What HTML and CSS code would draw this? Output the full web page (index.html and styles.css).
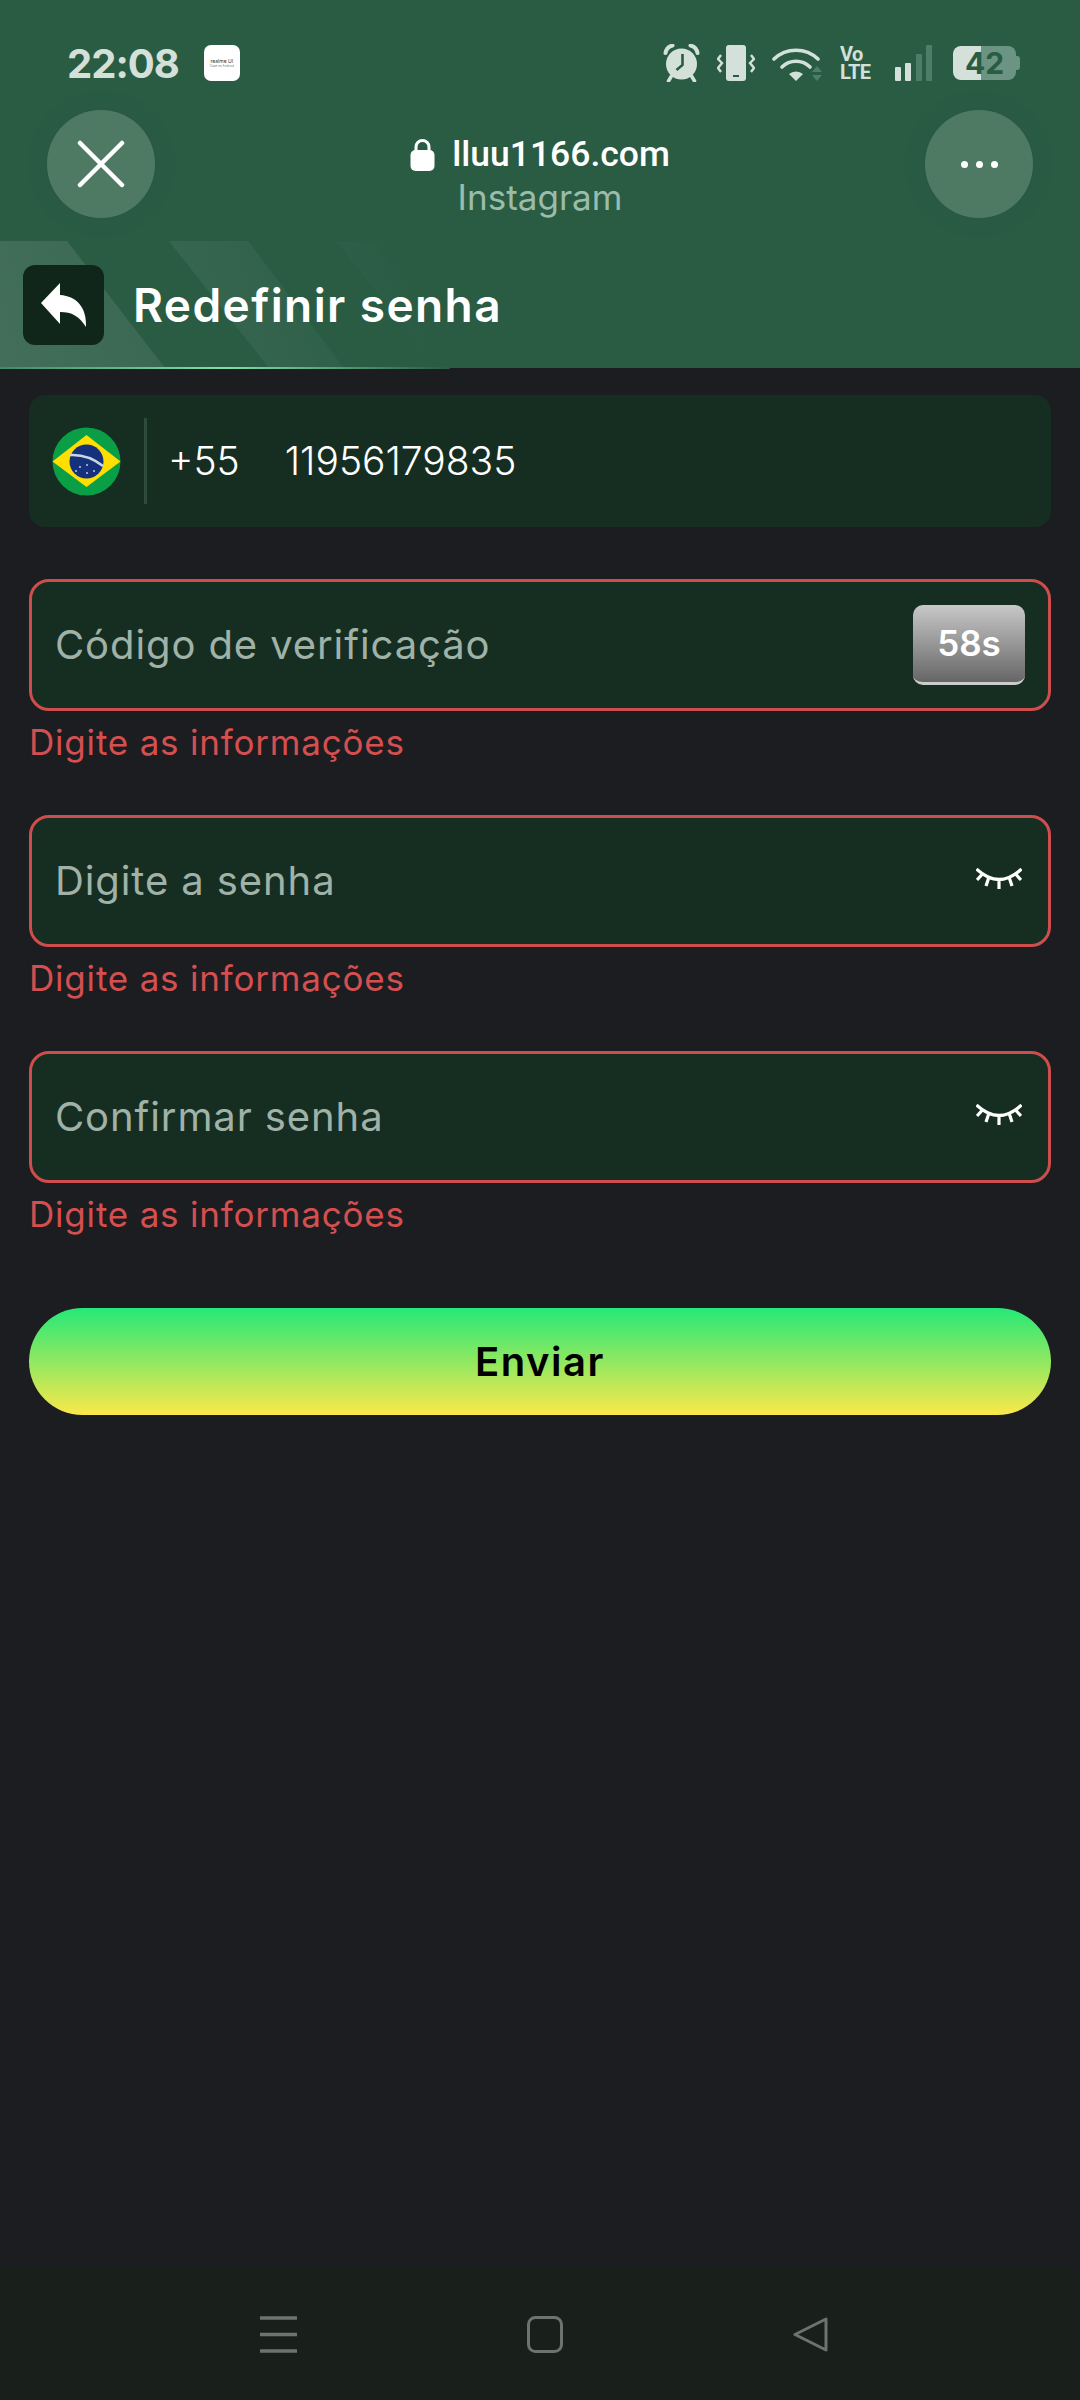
FILE: index.html
```html
<!DOCTYPE html>
<html lang="pt-BR">
<head>
<meta charset="UTF-8" />
<meta name="viewport" content="width=device-width, initial-scale=1" />
<title>Redefinir senha</title>
<link rel="stylesheet" href="styles.css">
</head>
<body>

<header class="top">
  <!-- faixas diagonais -->
  <svg class="stripes" width="460" height="127" viewBox="0 0 460 127">
    <defs>
      <linearGradient id="fade" gradientUnits="userSpaceOnUse" x1="0" y1="127" x2="400" y2="0">
        <stop offset="0" stop-color="#fff" stop-opacity=".12"/>
        <stop offset="1" stop-color="#fff" stop-opacity="0"/>
      </linearGradient>
    </defs>
    <polygon points="0,0 67,0 165,127 0,127" fill="url(#fade)"/>
    <polygon points="169,0 248,0 344,127 269,127" fill="url(#fade)"/>
    <polygon points="336,0 375,0 470,127 437,127" fill="url(#fade)"/>
  </svg>

  <div class="statusbar">
    <span class="time">22:08</span>
    <span class="notif"><b>realme UI</b><i>Cope on Android</i></span>
    <div class="status-icons">
      <svg width="37" height="38" viewBox="0 0 36 38">
        <circle cx="18" cy="20" r="15.5" fill="#d3e1da"/>
        <path d="M2 9 Q3 3 9 1.5" stroke="#d3e1da" stroke-width="4" fill="none" stroke-linecap="round"/>
        <path d="M34 9 Q33 3 27 1.5" stroke="#d3e1da" stroke-width="4" fill="none" stroke-linecap="round"/>
        <path d="M8 32 L5 37 M28 32 L31 37" stroke="#d3e1da" stroke-width="3.5" stroke-linecap="round"/>
        <path d="M19 10 V21 L13 26" stroke="#2a5c44" stroke-width="2.6" fill="none"/>
      </svg>
      <svg width="38" height="36" viewBox="0 0 38 36">
        <rect x="9" y="0" width="20" height="36" rx="3" fill="#d3e1da"/>
        <rect x="16" y="30" width="6" height="2" fill="#2a5c44"/>
        <path d="M4 10 L1 14 L5 18 L1 23 L4 27" stroke="#d3e1da" stroke-width="2.4" fill="none"/>
        <path d="M34 10 L37 14 L33 18 L37 23 L34 27" stroke="#d3e1da" stroke-width="2.4" fill="none"/>
      </svg>
      <svg width="51" height="36" viewBox="0 0 51 36">
        <path d="M2 14 A32 32 0 0 1 46 14" stroke="#d3e1da" stroke-width="3.6" fill="none" stroke-linecap="round"/>
        <path d="M10 22 A20 20 0 0 1 38 22" stroke="#d3e1da" stroke-width="3.6" fill="none" stroke-linecap="round"/>
        <path d="M17 29 A11 11 0 0 1 31 29 L24 36 Z" fill="#d3e1da"/>
        <path d="M40 27 L45 21 L50 27 Z M40 30 L50 30 L45 36 Z" fill="#4e7e68"/>
      </svg>
      <span class="volte"><span>Vo</span><span>LTE</span></span>
      <svg class="signal" width="39" height="36" viewBox="0 0 37 36">
        <rect x="0" y="22" width="6" height="14" rx="1" fill="#d3e1da"/>
        <rect x="10" y="18" width="6" height="18" rx="1" fill="#d3e1da"/>
        <rect x="21" y="9" width="6" height="27" rx="1" fill="#4e7e68"/>
        <rect x="31" y="0" width="6" height="36" rx="1" fill="#4e7e68"/>
      </svg>
      <div class="battery"><span class="battery-body">42</span><span class="battery-nub"></span></div>
    </div>
  </div>

  <div class="browserbar">
    <button class="round" aria-label="Fechar">
      <svg width="48" height="48" viewBox="0 0 48 48">
        <path d="M3 3 L45 45 M45 3 L3 45" stroke="#fff" stroke-width="4.5" stroke-linecap="round"/>
      </svg>
    </button>
    <div class="site">
      <div class="domain">
        <svg width="25" height="33" viewBox="0 0 25 33">
          <path d="M6 14 V9 A6.5 6.5 0 0 1 19 9 V14" stroke="#fff" stroke-width="3" fill="none"/>
          <rect x="0.5" y="12" width="24" height="21" rx="5" fill="#fff"/>
        </svg>
        <span>lluu1166.com</span>
      </div>
      <div class="origin">Instagram</div>
    </div>
    <button class="round" aria-label="Mais">
      <span class="dot"></span><span class="dot"></span><span class="dot"></span>
    </button>
  </div>

  <div class="pagehead">
    <div class="back">
      <svg width="46" height="44" viewBox="0 0 46 44">
        <path d="M19 0 V12 C36 13 46 25 45 44 C38 33 31 29 19 29 V41 L0 20 Z" fill="#fff"/>
      </svg>
    </div>
    <h1>Redefinir senha</h1>
  </div>
</header>

<main class="form">
  <div class="field phone">
    <svg class="flag" width="69" height="69" viewBox="0 0 69 69">
      <circle cx="34.5" cy="34.5" r="34" fill="#0a9e46"/>
      <clipPath id="round"><circle cx="34.5" cy="34.5" r="34"/></clipPath>
      <polygon points="34.5,8 68.5,34.5 34.5,60 0.5,34.5" fill="#fedf00" clip-path="url(#round)"/>
      <circle cx="34.5" cy="34.5" r="17" fill="#15307c"/>
      <path d="M18 28 Q36 27 51 39" stroke="#c8d8e0" stroke-width="2.5" fill="none"/>
      <g fill="#b8c8e0">
        <circle cx="28" cy="40" r="1"/><circle cx="35" cy="38" r="1"/><circle cx="42" cy="44" r="1"/>
        <circle cx="24" cy="44" r="1"/><circle cx="35" cy="46" r="1"/>
      </g>
    </svg>
    <span class="sep"></span>
    <span class="ddi">+55</span>
    <span class="number">11956179835</span>
  </div>

  <div class="group">
    <div class="field invalid">
      <span class="hint">Código de verificação</span>
      <span class="timer">58s</span>
    </div>
    <p class="error">Digite as informações</p>
  </div>

  <div class="group">
    <div class="field invalid">
      <span class="hint">Digite a senha</span>
      <svg class="eye" width="46" height="22" viewBox="0 0 46 22">
        <path d="M0.5 1 Q23 22 45.5 1 M1 12 L6 6.5 M10 18 L12.5 10.5 M23 21 V13 M36 18 L33.5 10.5 M45 12 L40 6.5" stroke="#fff" stroke-width="3.2" fill="none"/>
      </svg>
    </div>
    <p class="error">Digite as informações</p>
  </div>

  <div class="group">
    <div class="field invalid">
      <span class="hint">Confirmar senha</span>
      <svg class="eye" width="46" height="22" viewBox="0 0 46 22">
        <path d="M0.5 1 Q23 22 45.5 1 M1 12 L6 6.5 M10 18 L12.5 10.5 M23 21 V13 M36 18 L33.5 10.5 M45 12 L40 6.5" stroke="#fff" stroke-width="3.2" fill="none"/>
      </svg>
    </div>
    <p class="error">Digite as informações</p>
  </div>

  <button class="submit">Enviar</button>
</main>

<nav class="navbar">
  <svg width="37" height="37" viewBox="0 0 37 37">
    <path d="M0 2 H37 M0 18.5 H37 M0 35 H37" stroke="#6f736f" stroke-width="3.4"/>
  </svg>
  <svg width="36" height="37" viewBox="0 0 36 37">
    <rect x="1.5" y="1.5" width="33" height="34" rx="7" fill="none" stroke="#6f736f" stroke-width="3"/>
  </svg>
  <svg width="36" height="37" viewBox="0 0 36 37">
    <path d="M33 3 V34 L2 18.5 Z" fill="none" stroke="#6f736f" stroke-width="3" stroke-linejoin="round"/>
  </svg>
</nav>

</body>
</html>
```

FILE: styles.css
```css
* {
  box-sizing: border-box;
}
body {
  margin: 0;
  height: 2400px;
  display: flex;
  flex-direction: column;
  background: #1c1d21;
  font-family: Inter, "Liberation Sans", sans-serif;
  color: #fff;
}
button {
  border: 0;
  font-family: inherit;
  cursor: pointer;
}

/* topo verde */
.top {
  position: relative;
  height: 369px;
  padding-top: 44px;
  background: #2a5c44;
  border-bottom: 1px solid #1c1d21;
}
.top::after {
  content: "";
  position: absolute;
  left: 0;
  bottom: -1px;
  width: 450px;
  height: 2px;
  background: linear-gradient(to right, #3f8d68, #7fe0a8 50%, #2a5c44);
}
.stripes {
  position: absolute;
  left: 0;
  top: 241px;
}

/* barra de status */
.statusbar {
  display: flex;
  align-items: center;
  height: 38px;
  padding: 0 60px 0 67px;
}
.time {
  font-size: 40px;
  font-weight: 700;
  color: #d3e1da;
  letter-spacing: -1px;
}
.notif {
  width: 36px;
  height: 36px;
  margin-left: 25px;
  border-radius: 7px;
  background: #fff;
  color: #333;
  display: flex;
  flex-direction: column;
  align-items: center;
  justify-content: center;
  overflow: hidden;
  white-space: nowrap;
}
.notif b {
  font-size: 5px;
  font-weight: 400;
  line-height: 6px;
}
.notif i {
  font-size: 3px;
  font-style: normal;
  line-height: 4px;
  color: #777;
}
.status-icons {
  margin-left: auto;
  display: flex;
  align-items: center;
  gap: 17px;
}
.volte {
  width: 32px;
  font-family: Roboto, sans-serif;
  font-size: 20px;
  font-weight: 700;
  color: #d3e1da;
  letter-spacing: -0.6px;
}
.volte span {
  display: block;
  line-height: 18px;
}
.signal {
  margin-left: 5px;
}
.battery {
  display: flex;
  align-items: center;
  margin-left: 3px;
}
.battery-body {
  width: 63px;
  height: 34px;
  border-radius: 8px;
  background: linear-gradient(to right, #d3e1da 44%, #6b9582 44%);
  color: #2a5c44;
  font-size: 30px;
  font-weight: 700;
  line-height: 34px;
  text-align: center;
}
.battery-nub {
  width: 4px;
  height: 14px;
  border-radius: 0 3px 3px 0;
  background: #6b9582;
}

/* barra do navegador */
.browserbar {
  display: grid;
  grid-template-columns: 108px 1fr 108px;
  align-items: center;
  margin-top: 28px;
  padding: 0 47px;
}
.round {
  width: 108px;
  height: 108px;
  border-radius: 50%;
  background: #4e7a64;
  box-shadow: 0 0 30px rgba(0, 0, 0, .06);
  display: flex;
  align-items: center;
  justify-content: center;
  gap: 8px;
  padding: 0;
}
.dot {
  width: 7px;
  height: 7px;
  border-radius: 50%;
  background: #fff;
}
.site {
  padding-top: 22px;
  text-align: center;
}
.domain {
  display: flex;
  align-items: center;
  justify-content: center;
  gap: 17px;
  font-family: Roboto, sans-serif;
  font-size: 35.5px;
  font-weight: 500;
  line-height: 44px;
}
.origin {
  font-size: 35px;
  line-height: 42px;
  color: #9bbcab;
}

/* titulo */
.pagehead {
  position: relative;
  display: flex;
  align-items: center;
  gap: 29px;
  margin-top: 47px;
  padding-left: 23px;
}
.back {
  width: 81px;
  height: 80px;
  border-radius: 12px;
  background: #10261a;
  display: flex;
  align-items: center;
  justify-content: center;
}
h1 {
  margin: 0;
  font-size: 46px;
  font-weight: 600;
  letter-spacing: 1.4px;
}

/* formulario */
.form {
  flex: 1;
  padding: 26px 29px 0;
}
.field {
  height: 132px;
  border-radius: 20px;
  background: #162e21;
  display: flex;
  align-items: center;
  justify-content: space-between;
  padding: 0 23px;
}
.phone {
  justify-content: flex-start;
  padding-left: 23px;
  border-radius: 16px;
  margin-bottom: 52px;
}
.flag {
  flex: none;
}
.sep {
  width: 3px;
  height: 86px;
  margin: 0 21px 0 23px;
  background: #2d4a3a;
}
.ddi,
.number {
  margin-bottom: 2px;
  font-size: 39px;
  font-weight: 300;
}
.ddi {
  margin-right: 45px;
}
.invalid {
  border: 3px solid #cf4d4d;
}
.hint {
  margin-bottom: 2px;
  font-size: 40px;
  font-weight: 400;
  color: #a0b2a8;
  letter-spacing: 0.9px;
}
.eye {
  margin: 0 3px 4px 0;
}
.timer {
  width: 112px;
  height: 80px;
  border-radius: 10px;
  border-bottom: 3px solid #ccc;
  background: linear-gradient(#c8c8c8, #666);
  font-size: 35px;
  font-weight: 600;
  line-height: 77px;
  text-align: center;
}
.group {
  margin-bottom: 53px;
}
.error {
  margin: 11px 0 0;
  font-size: 35px;
  font-weight: 400;
  line-height: 40px;
  color: #d44f4f;
  letter-spacing: 0.8px;
}
.submit {
  display: block;
  width: 100%;
  height: 107px;
  margin-top: 74px;
  border-radius: 54px;
  background: linear-gradient(#25e878, #fbe84a);
  color: #000;
  font-size: 40px;
  font-weight: 600;
  letter-spacing: 1.5px;
}

/* navegacao android */
.navbar {
  height: 132px;
  background: #191f1b;
  display: flex;
  align-items: center;
  padding: 0 251px 0 260px;
  justify-content: space-between;
}
```
